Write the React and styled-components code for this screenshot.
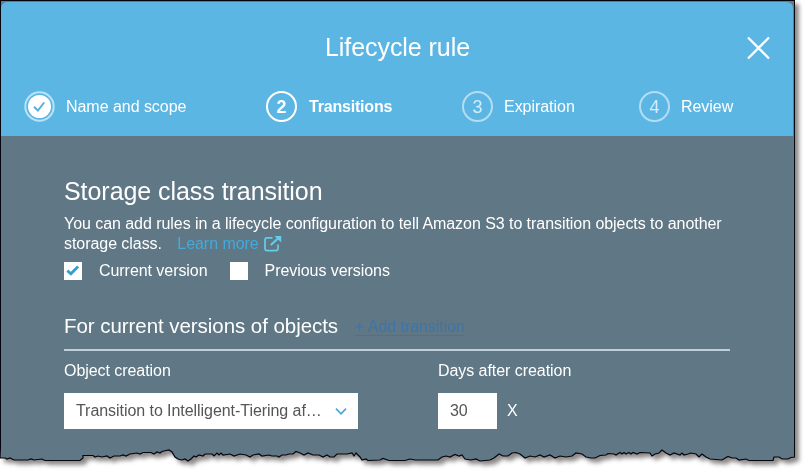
import React from "react";
import styled, { createGlobalStyle } from "styled-components";

const GlobalStyle = createGlobalStyle`
  *, *::before, *::after { box-sizing: border-box; }
  body { margin: 0; background: #fff; overflow: hidden; font-family: "Liberation Sans", Arial, sans-serif; font-size: 16px; letter-spacing: -0.055px; color: #fff; }
  h1, h2, h3, p { margin: 0; font-weight: 400; }
  svg { display: block; flex: none; }
`;

const Frame = styled.div`
  width: 795px;
  height: 471px;
  display: flex;
  flex-direction: column;
  filter: drop-shadow(4px 4px 2px rgba(30, 20, 20, 0.5));
`;

const Window = styled.main`
  height: 445px;
  border: 1px solid #05050d;
  border-bottom: 0;
  padding: 1px 1px 0 0;
  background: #667a86;
  flex: none;
`;

const Header = styled.header`
  height: 134px;
  background: #5cb6e3;
  border-radius: 6px 6px 0 0;
  padding: 0 22px 0 23px;
`;

const TitleBar = styled.div`
  height: 89px;
  display: grid;
  grid-template-columns: 24px 1fr 24px;
  align-items: center;
`;

const Title = styled.h1`
  text-align: center;
  font-size: 25px;
  line-height: 28px;
`;

const IconButton = styled.button`
  padding: 2px 0 0;
  border: 0;
  background: none;
  color: #fff;
`;

const Steps = styled.nav`
  display: grid;
  grid-template-columns: 242px 196px 177px auto;
  height: 31px;
`;

const Step = styled.div`
  display: flex;
  align-items: center;
  gap: ${(p) => (p.$active ? "12px" : "11px")};
  letter-spacing: ${(p) => (p.$active ? "-0.2px" : "-0.04px")};
  font-weight: ${(p) => (p.$active ? 700 : 400)};
`;

const Badge = styled.span`
  width: 31px;
  height: 31px;
  flex: none;
  border-radius: 50%;
  border: ${(p) => (p.$active ? "2.4px solid #fff" : "2px solid #b4ddf4")};
  color: ${(p) => (p.$active ? "#fff" : "#d3edfa")};
  display: flex;
  align-items: center;
  justify-content: center;
  font-size: 18px;
  letter-spacing: 0;
  padding-top: 2px;
`;

const Body = styled.section`
  height: 309px;
  background: #607785;
  padding: 40px 63px 0 63px;
`;

const Heading = styled.h2`
  font-size: 25px;
  line-height: 30px;
`;

const Description = styled.p`
  margin-top: 8px;
  line-height: 20px;
  white-space: nowrap;
`;

const Learn = styled.a`
  display: inline-flex;
  align-items: center;
  gap: 5px;
  margin-left: 11px;
  color: #43aadc;
  vertical-align: top;
  height: 20px;
`;

const Options = styled.div`
  display: flex;
  gap: 22px;
  margin-top: 7px;
`;

const Option = styled.label`
  display: flex;
  align-items: center;
  gap: 17px;
  height: 20px;
`;

const Box = styled.span`
  width: 18px;
  height: 18px;
  background: #fff;
`;

const Section = styled.div`
  display: flex;
  align-items: center;
  gap: 17px;
  height: 50px;
  margin-top: 20px;
  border-bottom: 2px solid #c0cfd9;
`;

const Subheading = styled.h3`
  font-size: 20.5px;
  padding-top: 2px;
`;

const AddLink = styled.a`
  color: #3e74a9;
  border-bottom: 1px solid #3e74a9;
  line-height: 16px;
  margin-top: 4px;
`;

const Fields = styled.div`
  display: grid;
  grid-template-columns: 374px 1fr;
  margin-top: 10px;
`;

const Field = styled.div`
  line-height: 20px;
`;

const Control = styled.div`
  display: flex;
  align-items: center;
  gap: 10px;
  margin-top: 12px;
`;

const Input = styled.div`
  width: ${(p) => p.$width};
  height: 36px;
  display: flex;
  align-items: center;
  justify-content: space-between;
  padding: 0 11px 0 12px;
  background: #fff;
  color: #555;
`;

const points = [
  [0, 458], [5, 458], [7, 459], [10, 458], [14, 460], [28, 460], [31, 459], [34, 460], [42, 459], [45, 460.5], [80, 460.5],
  [83, 458], [83, 455.5], [93, 455.5], [95, 457], [98, 456], [102, 457], [107, 456], [110, 458], [114, 456], [120, 456],
  [123, 455], [126, 456], [130, 454], [137, 453], [140, 454], [143, 452.5], [151, 452.5], [154, 454], [157, 452], [160, 453],
  [162, 451.5], [166, 450.5], [169, 450], [172, 452], [175, 457], [178, 459], [182, 460], [185, 459], [188, 461], [191, 459],
  [194, 456], [196, 457], [199, 455], [203, 456], [205, 454], [212, 454], [214, 456], [217, 453], [219, 455], [221, 453],
  [223, 455], [230, 454], [234, 456], [240, 454], [246, 455], [250, 457], [253, 455], [259, 454], [262, 456], [269, 455],
  [272, 456], [277, 456], [279, 457], [282, 455], [286, 455], [289, 454], [293, 454], [296, 451.5], [300, 453], [304, 455],
  [308, 453], [313, 455], [319, 455], [323, 457], [327, 455], [330, 457], [334, 457], [337, 454], [347, 454], [352, 453],
  [354, 456], [356, 453], [360, 457], [362, 460], [366, 459], [368, 460.5], [380, 460], [383, 458.5], [389, 460.5],
  [405, 460.5], [410, 459], [415, 460], [438, 460], [442, 457], [446, 456], [450, 457], [455, 454.5], [459, 456],
  [462, 455], [465, 459], [471, 460], [476, 459], [480, 461], [490, 460], [494, 458], [499, 454], [503, 456], [508, 456],
  [512, 453], [516, 452.5], [520, 454], [525, 458], [530, 456], [535, 457], [540, 455], [544, 457], [550, 455], [555, 458],
  [560, 456], [566, 457], [572, 456], [576, 453], [582, 454], [586, 457], [591, 458], [595, 458], [600, 455.5], [606, 455],
  [608, 453.5], [614, 454], [616, 455], [620, 452.5], [622, 454], [624, 452.5], [626, 454], [629, 452.5], [631, 454],
  [633, 452.5], [637, 454], [640, 452.5], [650, 453], [652, 456], [655, 454], [659, 453], [662, 450], [666, 453], [670, 455],
  [674, 453], [680, 455], [682, 453], [684, 455], [688, 454], [691, 453], [696, 454], [699, 457], [702, 454], [706, 457],
  [710, 459], [722, 460], [728, 456.5], [732, 458], [736, 458], [739, 460], [746, 459], [749, 460.5], [773, 460.5],
  [774, 457], [779, 457], [782, 459], [788, 459], [791, 457.5], [794.5, 457],
];
const edge = points.map(([x, y]) => `${x},${y - 445}`).join(" L");

const TornEdge = () => (
  <svg width="795" height="20" viewBox="0 0 795 20">
    <path d={`M0,0 L${edge} L794.5,0 Z`} fill="#607785" />
    <path d="M793.5,0 V13" stroke="#71818b" />
    <path d={`M0.5,0 L${edge} L794.5,0`} fill="none" stroke="#05050d" strokeWidth="1.2" />
  </svg>
);

const steps = [
  { label: "Name and scope" },
  { label: "Transitions", active: true },
  { label: "Expiration" },
  { label: "Review" },
];

const DoneIcon = () => (
  <svg width="31" height="31" viewBox="0 0 31 31">
    <circle cx="15.5" cy="15.5" r="14.2" fill="none" stroke="#b9e2f7" strokeWidth="2" />
    <circle cx="15.5" cy="15.5" r="11.5" fill="#fff" />
    <path d="M10 15.8l3.9 3.7 6.3-8" fill="none" stroke="#59afdb" strokeWidth="2" />
  </svg>
);

const CloseIcon = () => (
  <svg width="24" height="24" viewBox="0 0 24 24">
    <path d="M1 1.5l21 21M22 1.5l-21 21" stroke="#fff" strokeWidth="2.3" />
  </svg>
);

const ExternalIcon = () => (
  <svg width="18" height="17" viewBox="0 0 18 17" fill="none" stroke="#65cdea" strokeWidth="1.7">
    <path d="M8.5 1.8H3.2Q1 1.8 1 4v8.4q0 2.2 2.2 2.2h8.6q2.2 0 2.2-2.2V8.6" />
    <path d="M6.8 9L14.5 2" strokeWidth="2.2" />
    <path d="M10.5 0h6.7v6.4z" fill="#65cdea" stroke="none" />
  </svg>
);

const CheckIcon = () => (
  <svg width="18" height="18" viewBox="0 0 18 18">
    <path d="M3.3 8.6l3.6 3.2 7.2-7.4" fill="none" stroke="#369dcf" strokeWidth="2.8" />
  </svg>
);

const ChevronIcon = () => (
  <svg width="12" height="8" viewBox="0 0 12 8">
    <path d="M1 1.7l5 5.1 5-5.1" fill="none" stroke="#4aa8d8" strokeWidth="1.7" />
  </svg>
);

export default function App() {
  return (
    <>
      <GlobalStyle />
      <Frame>
        <Window>
          <Header>
            <TitleBar>
              <span />
              <Title>Lifecycle rule</Title>
              <IconButton aria-label="Close"><CloseIcon /></IconButton>
            </TitleBar>
            <Steps>
              {steps.map((s, i) => (
                <Step key={s.label} $active={s.active}>
                  {i === 0 ? <DoneIcon /> : <Badge $active={s.active}>{i + 1}</Badge>}
                  <span>{s.label}</span>
                </Step>
              ))}
            </Steps>
          </Header>
          <Body>
            <Heading>Storage class transition</Heading>
            <Description>
              You can add rules in a lifecycle configuration to tell Amazon S3 to transition objects to another
              <br />
              storage class. <Learn>Learn more <ExternalIcon /></Learn>
            </Description>
            <Options>
              <Option><Box><CheckIcon /></Box>Current version</Option>
              <Option><Box />Previous versions</Option>
            </Options>
            <Section>
              <Subheading>For current versions of objects</Subheading>
              <AddLink>+ Add transition</AddLink>
            </Section>
            <Fields>
              <Field>
                Object creation
                <Control>
                  <Input $width="294px"><span>Transition to Intelligent-Tiering af…</span><ChevronIcon /></Input>
                </Control>
              </Field>
              <Field>
                Days after creation
                <Control><Input $width="59px">30</Input>X</Control>
              </Field>
            </Fields>
          </Body>
        </Window>
        <TornEdge />
      </Frame>
    </>
  );
}
